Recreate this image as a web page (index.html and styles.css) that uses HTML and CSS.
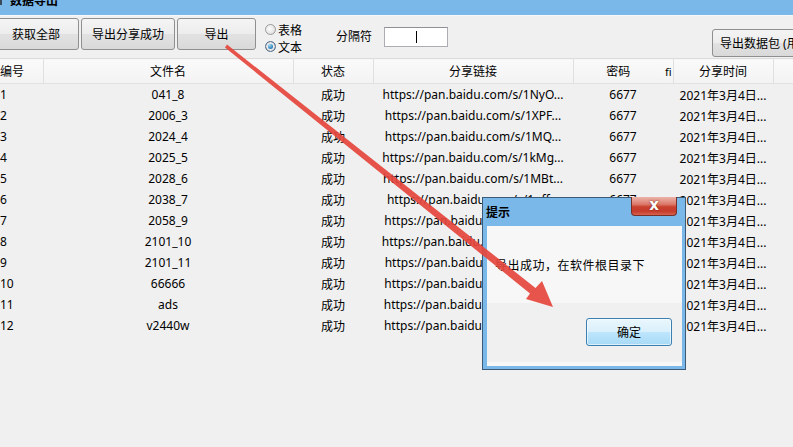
FILE: index.html
```html
<!DOCTYPE html>
<html lang="zh-CN">
<head>
    <meta charset="UTF-8">
    <title>数据导出</title>
    <link rel="stylesheet" href="styles.css">
</head>
<body>
    <div class="window">
        <div class="titlebar">
            <span class="app-icon"></span>
            <span class="title">数据导出</span>
        </div>

        <div class="toolbar">
            <button class="btn btn-first">获取全部</button>
            <button class="btn btn-wide">导出分享成功</button>
            <button class="btn btn-export">导出</button>
            <div class="radios">
                <label class="radio"><span class="dot"></span>表格</label>
                <label class="radio checked"><span class="dot"></span>文本</label>
            </div>
            <span class="sep-label">分隔符</span>
            <div class="sep-input"><span class="caret"></span></div>
            <button class="btn btn-pack">导出数据包 (用于导入)</button>
        </div>

        <table class="grid">
            <colgroup>
                <col style="width:43px">
                <col style="width:250px">
                <col style="width:80px">
                <col style="width:200px">
                <col style="width:90px">
                <col style="width:10px">
                <col style="width:100px">
                <col>
            </colgroup>
            <thead>
                <tr>
                    <th class="left">编号</th>
                    <th>文件名</th>
                    <th>状态</th>
                    <th>分享链接</th>
                    <th class="no-line">密码</th>
                    <th class="left tiny">fi</th>
                    <th>分享时间</th>
                    <th class="no-line"></th>
                </tr>
            </thead>
            <tbody id="rows"></tbody>
        </table>
    </div>

    <div class="dialog">
        <div class="dialog-head">
            <span class="dialog-title">提示</span>
            <span class="close">x</span>
        </div>
        <div class="dialog-msg">导出成功，在软件根目录下</div>
        <div class="dialog-foot">
            <button class="ok-btn">确定</button>
        </div>
    </div>

    <svg class="arrow" width="793" height="447" viewBox="0 0 793 447">
        <polygon points="225,47.5 227,44.5 535.5,288 542,281 553,307 526,299 530,293.5" fill="#e5453c" fill-opacity="0.92"/>
    </svg>

    <script>
        // Données du tableau
        const rows = [
            ['1', '041_8', 'https://pan.baidu.com/s/1NyO...'],
            ['2', '2006_3', 'https://pan.baidu.com/s/1XPF...'],
            ['3', '2024_4', 'https://pan.baidu.com/s/1MQ...'],
            ['4', '2025_5', 'https://pan.baidu.com/s/1kMg...'],
            ['5', '2028_6', 'https://pan.baidu.com/s/1MBt...'],
            ['6', '2038_7', 'https://pan.baidu.com/s/1uff...'],
            ['7', '2058_9', 'https://pan.baidu.com/s/1Zkd...'],
            ['8', '2101_10', 'https://pan.baidu.com/s/1bWq...'],
            ['9', '2101_11', 'https://pan.baidu.com/s/1Ex7...'],
            ['10', '66666', 'https://pan.baidu.com/s/1HcT...'],
            ['11', 'ads', 'https://pan.baidu.com/s/1Rp2...'],
            ['12', 'v2440w', 'https://pan.baidu.com/s/1Gov...']
        ];

        document.getElementById('rows').innerHTML = rows.map(r => `
            <tr>
                <td class="left">${r[0]}</td>
                <td>${r[1]}</td>
                <td>成功</td>
                <td>${r[2]}</td>
                <td colspan="2">6677</td>
                <td>2021年3月4日...</td>
                <td></td>
            </tr>
        `).join('');
    </script>
</body>
</html>
```

FILE: styles.css
```css
body {
    margin: 0;
    width: 793px;
    height: 447px;
    overflow: hidden;
    background: #f0f0f0;
    font-family: "Noto Sans", "Noto Sans CJK SC", sans-serif;
    font-size: 12px;
    color: #000;
    position: relative;
}
.window {
    width: 793px;
}
.titlebar {
    height: 15px;
    background: #7ab8e9;
    border-bottom: 1px solid #f8f8f8;
    overflow: hidden;
    display: flex;
}
.app-icon {
    width: 2px;
    height: 5px;
    background: #3a4a5a;
}
.title {
    margin-left: 8px;
    margin-top: -6px;
    line-height: 14px;
    font-weight: bold;
}
.toolbar {
    height: 42px;
    padding-top: 2px;
    box-sizing: border-box;
    display: flex;
    align-items: flex-start;
}
.btn {
    height: 32px;
    padding: 0;
    font-family: inherit;
    font-size: 12px;
    color: #000;
    white-space: nowrap;
    border: 1px solid #8e8f8f;
    border-radius: 3px;
    background: linear-gradient(#f4f4f4 0%, #ededed 50%, #e2e2e2 50%, #d9d9d9 100%);
    flex-shrink: 0;
    margin-right: 2px;
}
.btn-first {
    width: 86px;
    margin-left: -7px;
}
.btn-wide {
    width: 94px;
}
.btn-export {
    width: 79px;
}
.radios {
    margin-left: 7px;
    margin-top: 3px;
    display: flex;
    flex-direction: column;
}
.radio {
    height: 17px;
    display: flex;
    align-items: center;
    gap: 2px;
}
.dot {
    width: 9px;
    height: 9px;
    border: 1px solid #9a9a9a;
    border-radius: 50%;
    background: radial-gradient(circle at 40% 40%, #fdfdfd, #d6d6d6);
}
.checked .dot {
    border-color: #5a6f85;
    background: radial-gradient(circle at 40% 35%, #9fd7f7 0%, #2d7fb8 45%, #174a73 100%);
    box-shadow: inset 0 0 0 2px #e8e8e8;
}
.sep-label {
    margin-left: 34px;
    margin-top: 9px;
    line-height: 20px;
}
.sep-input {
    width: 31px;
    height: 18px;
    margin-left: 12px;
    margin-top: 9px;
    background: #fff;
    border: 1px solid #abadb3;
    border-top-color: #8d9095;
    display: flex;
    align-items: center;
    padding-left: 31px;
}
.caret {
    width: 1px;
    height: 12px;
    background: #000;
}
.btn-pack {
    margin-left: auto;
    margin-right: -30px;
    margin-top: 11px;
    height: 28px;
    width: 111px;
    text-align: left;
    padding-left: 7px;
    overflow: hidden;
}
.grid {
    width: 793px;
    table-layout: fixed;
    border-collapse: collapse;
}
.grid th {
    height: 24px;
    padding: 0;
    font-weight: normal;
    background: linear-gradient(#fafafa, #f3f3f3);
    border-top: 1px solid #dcdcdc;
    border-bottom: 1px solid #e2e2e2;
    border-right: 1px solid #e0e0e0;
    white-space: nowrap;
    overflow: hidden;
}
.grid th.no-line {
    border-right: none;
}
.grid th.tiny {
    padding-left: 2px;
    font-size: 11px;
}
.grid td {
    height: 21px;
    padding: 0;
    text-align: center;
    white-space: nowrap;
    overflow: hidden;
}
.grid .left {
    text-align: left;
}
.dialog {
    position: absolute;
    left: 482px;
    top: 197px;
    width: 204px;
    height: 173px;
    box-sizing: border-box;
    border: 1px solid #3b5a78;
    background: #79b8e8;
    padding: 0 3px 3px 4px;
    display: flex;
    flex-direction: column;
}
.dialog-head {
    height: 28px;
    display: flex;
    justify-content: space-between;
    align-items: flex-start;
}
.dialog-title {
    margin-left: -1px;
    margin-top: 7px;
    line-height: 16px;
    font-weight: bold;
}
.close {
    width: 44px;
    height: 18px;
    margin-top: -1px;
    margin-right: 5px;
    border: 1px solid #7a2f26;
    border-top: none;
    border-radius: 0 0 4px 4px;
    background: linear-gradient(#ecb3aa 0%, #dc7b6c 40%, #c9402f 55%, #c73d2d 80%, #d6614f 100%);
    color: #fff;
    font-family: "DejaVu Sans", sans-serif;
    font-weight: bold;
    font-size: 15px;
    line-height: 16px;
    text-align: center;
    text-shadow: 0 0 2px #6b1b12;
}
.dialog-msg {
    height: 77px;
    box-sizing: border-box;
    background: #f7f7f7;
    padding: 32px 0 0 8px;
    line-height: 16px;
    letter-spacing: 0.5px;
}
.dialog-foot {
    flex: 1;
    background: #f0f0f0;
    border-bottom: 4px solid #f7f7f7;
    display: flex;
    justify-content: flex-end;
    align-items: flex-start;
    padding: 15px 10px 0 0;
}
.ok-btn {
    width: 86px;
    height: 28px;
    font-family: inherit;
    font-size: 12px;
    color: #000;
    border: 1px solid #3c7fb1;
    border-radius: 3px;
    background: linear-gradient(#eaf6fd 0%, #d9f0fc 50%, #bee6fd 50%, #a7d9f5 100%);
    box-shadow: inset 0 0 0 1px rgba(255, 255, 255, 0.6);
}
.arrow {
    position: absolute;
    left: 0;
    top: 0;
    pointer-events: none;
}
```
